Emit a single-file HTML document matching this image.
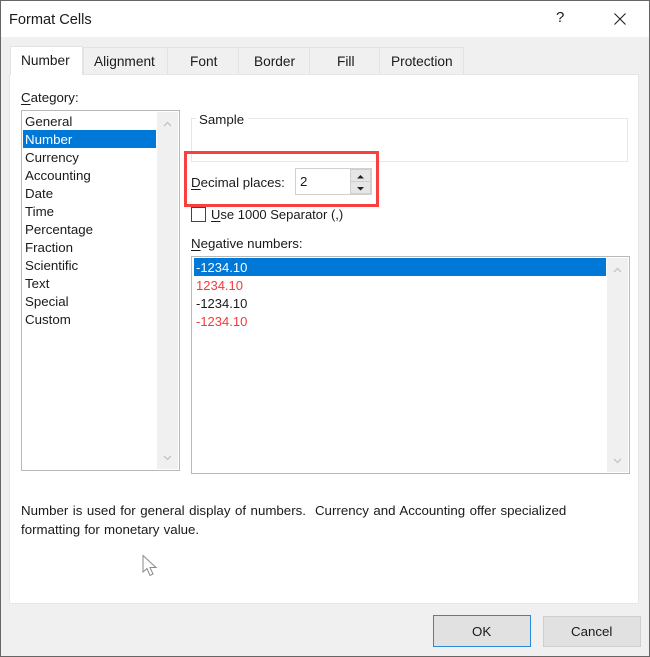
<!DOCTYPE html>
<html><head><meta charset="utf-8"><style>
html,body{margin:0;padding:0;background:#fff}
#d{position:relative;width:650px;height:657px;overflow:hidden;background:#f0f0f0;font-family:"Liberation Sans",sans-serif;font-size:13.3px;color:#1a1a1a}
#d div,#d span.t{position:absolute;box-sizing:border-box}
.t{white-space:nowrap;line-height:18px;position:absolute;margin-top:1px}
#d span.n{font-size:13px;margin-top:0}
#d span.b{font-size:13.7px;margin-top:0}
#d span.h{margin-top:0}
u{text-decoration-thickness:1px;text-underline-offset:2px}
.tab{background:#f0f0f0;border:1px solid #e3e3e3;border-bottom:none}
.list{background:#fff;border:1px solid #b9b9b9}
.sb{background:#f0f0f0}
.r{color:#f5393a}
</style></head><body><div id="d">
<div style="left:0;top:0;width:650px;height:37px;background:#fff"></div>
<div style="left:0;top:0;width:650px;height:1px;background:#666"></div>
<div style="left:0;top:0;width:1px;height:657px;background:#666"></div>
<div style="left:649px;top:0;width:1px;height:657px;background:#666"></div>
<div style="left:0;top:656px;width:650px;height:1px;background:#666"></div>
<span class="t h" style="left:9px;top:11px;font-size:14.6px">Format Cells</span>
<span class="t h" style="left:556px;top:9px;font-size:15px">?</span>
<svg style="position:absolute;left:613px;top:12px" width="14" height="14"><path d="M1.500 1.500L12.500 12.500M12.500 1.500L1.500 12.500" stroke="#222" stroke-width="1.100" fill="none"/></svg>

<div style="left:9px;top:74px;width:630px;height:530px;background:#fff;border:1px solid #e6e6e6"></div>
<div class="tab" style="left:83px;top:47px;width:85px;height:27px"></div>
<div class="tab" style="left:167px;top:47px;width:72px;height:27px"></div>
<div class="tab" style="left:238px;top:47px;width:72px;height:27px"></div>
<div class="tab" style="left:309px;top:47px;width:72px;height:27px"></div>
<div class="tab" style="left:379px;top:47px;width:85px;height:27px"></div>
<div style="left:10px;top:46px;width:73px;height:29px;background:#fff;border:1px solid #e3e3e3;border-bottom:none"></div>
<span class="t b" style="left:21px;top:52px">Number</span>
<span class="t b" style="left:94px;top:53px">Alignment</span>
<span class="t b" style="left:190px;top:53px">Font</span>
<span class="t b" style="left:254px;top:53px">Border</span>
<span class="t b" style="left:337px;top:53px">Fill</span>
<span class="t b" style="left:391px;top:53px">Protection</span>

<span class="t" style="left:21px;top:88px"><u>C</u>ategory:</span>
<div class="list" style="left:21px;top:110px;width:159px;height:361px"></div>
<div class="sb" style="left:157px;top:112px;width:21px;height:357px"></div>
<svg style="position:absolute;left:162px;top:120px" width="11" height="8"><path d="M2 6L5.500 2.500L9 6" stroke="#c4c4c4" stroke-width="1.300" fill="none"/></svg>
<svg style="position:absolute;left:162px;top:454px" width="11" height="8"><path d="M2 2L5.500 5.500L9 2" stroke="#c4c4c4" stroke-width="1.300" fill="none"/></svg>
<div style="left:23px;top:130px;width:133px;height:18px;background:#0078d7"></div>
<span class="t" style="left:25px;top:112px">General</span>
<span class="t" style="left:25px;top:130px;color:#fff">Number</span>
<span class="t" style="left:25px;top:148px">Currency</span>
<span class="t" style="left:25px;top:166px">Accounting</span>
<span class="t" style="left:25px;top:184px">Date</span>
<span class="t" style="left:25px;top:202px">Time</span>
<span class="t" style="left:25px;top:220px">Percentage</span>
<span class="t" style="left:25px;top:238px">Fraction</span>
<span class="t" style="left:25px;top:256px">Scientific</span>
<span class="t" style="left:25px;top:274px">Text</span>
<span class="t" style="left:25px;top:292px">Special</span>
<span class="t" style="left:25px;top:310px">Custom</span>

<div style="left:191px;top:118px;width:437px;height:44px;border:1px solid #e6e6e6"></div>
<div style="left:196px;top:110px;width:52px;height:18px;background:#fff"></div>
<span class="t" style="left:199px;top:110px">Sample</span>

<div style="left:184px;top:151px;width:195px;height:56px;border:3px solid #f8403f"></div>
<span class="t" style="left:191px;top:173px"><u>D</u>ecimal places:</span>
<div style="left:295px;top:168px;width:77px;height:27px;background:#fff;border:1px solid #d0d0d0"></div>
<span class="t" style="left:300px;top:172px">2</span>
<div style="left:350px;top:169px;width:21px;height:13px;background:#e6e6e6;border:1px solid #cfcfcf"></div>
<div style="left:350px;top:181px;width:21px;height:13px;background:#e6e6e6;border:1px solid #cfcfcf"></div>
<svg style="position:absolute;left:355px;top:172px" width="11" height="20"><path d="M2 6.500L5.500 3L9 6.500ZM2 15L9 15L5.500 18.500Z" fill="#222"/></svg>

<div style="left:191px;top:207px;width:15px;height:15px;background:#fff;border:1px solid #444"></div>
<span class="t n" style="left:211px;top:206px"><u>U</u>se 1000 Separator (,)</span>
<span class="t" style="left:191px;top:234px"><u>N</u>egative numbers:</span>
<div class="list" style="left:191px;top:256px;width:439px;height:218px"></div>
<div class="sb" style="left:607px;top:258px;width:21px;height:214px"></div>
<svg style="position:absolute;left:612px;top:266px" width="11" height="8"><path d="M2 6L5.500 2.500L9 6" stroke="#c4c4c4" stroke-width="1.300" fill="none"/></svg>
<svg style="position:absolute;left:612px;top:457px" width="11" height="8"><path d="M2 2L5.500 5.500L9 2" stroke="#c4c4c4" stroke-width="1.300" fill="none"/></svg>
<div style="left:194px;top:258px;width:412px;height:18px;background:#0078d7"></div>
<span class="t n" style="left:196px;top:259px;color:#fff">-1234.10</span>
<span class="t n r" style="left:196px;top:277px">1234.10</span>
<span class="t n" style="left:196px;top:295px">-1234.10</span>
<span class="t n r" style="left:196px;top:313px">-1234.10</span>

<span class="t" style="left:21px;top:501px;word-spacing:.8px;white-space:pre">Number is used for general display of numbers.  Currency and Accounting offer specialized</span>
<span class="t" style="left:21px;top:520px;word-spacing:.5px">formatting for monetary value.</span>

<svg style="position:absolute;left:141px;top:554px" width="18" height="24"><path d="M2 1.500L2 18L6 14.500L9 21.500L12 20L9 13.500L15 13.500Z" fill="#fff" stroke="#8a8a8a" stroke-width="1"/></svg>

<div style="left:433px;top:615px;width:98px;height:32px;background:#e1e1e1;border:1px solid #2b88d8"></div>
<span class="t" style="left:472px;top:622px">OK</span>
<div style="left:543px;top:616px;width:98px;height:31px;background:#e1e1e1;border:1px solid #cfcfcf"></div>
<span class="t" style="left:571px;top:622px">Cancel</span>
</div></body></html>
